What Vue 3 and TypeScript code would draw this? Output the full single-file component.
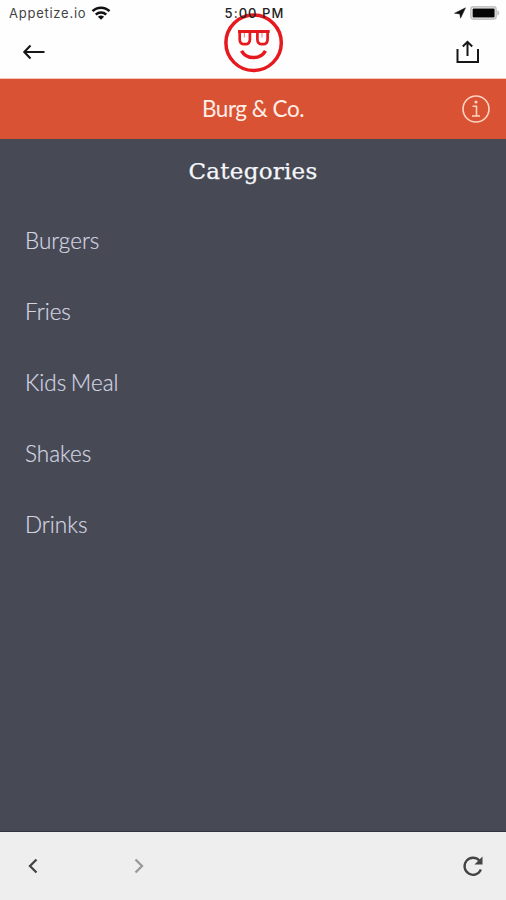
<script setup lang="ts">
const categories: string[] = ['Burgers', 'Fries', 'Kids Meal', 'Shakes', 'Drinks']
</script>

<template>
  <div class="screen">
    <header class="top">
      <div class="status">
        <div class="carrier">
          <span class="carrier-name">Appetize.io</span>
          <svg class="wifi" width="20" height="14" viewBox="0 0 20 14">
            <g fill="none" stroke="#111" stroke-width="2.5">
              <path d="M1.5 5.2C6.2.5 13.8.5 18.5 5.2" />
              <path d="M4.8 8.7C7.7 5.9 12.3 5.9 15.2 8.7" />
            </g>
            <path d="M10 13.7L6.9 10.7Q10 8.2 13.1 10.7Z" fill="#111" />
          </svg>
        </div>
        <span class="time">5:00 PM</span>
        <div class="indicators">
          <svg width="12" height="12" viewBox="0 0 12 12"><path d="M11.5.8L6.6 11.2L5.8 6.9L.5 6.3Z" fill="#111" stroke="#111" stroke-width=".5" /></svg>
          <svg width="30" height="14" viewBox="0 0 30 14">
            <rect x=".9" y=".9" width="25.2" height="12.2" rx="2.5" fill="#fff" stroke="#c3c3c3" stroke-width="1.6" />
            <rect x="2.6" y="2.6" width="22" height="8.8" rx="1" fill="#050505" />
            <path d="M27.3 4.3Q29.3 5 29.3 7T27.3 9.7Z" fill="#c3c3c3" />
          </svg>
        </div>
      </div>
      <nav class="nav">
        <svg width="24" height="16" viewBox="0 0 24 16" fill="none" stroke="#171717" stroke-width="2.1">
          <path d="M22.5 8H2.5M8.5 1.5L2.3 8l6.2 6.5" />
        </svg>
        <svg width="24" height="24" viewBox="0 0 24 24" fill="none" stroke="#171717" stroke-width="2">
          <path d="M1.5 9v13h20.5V9M11.5 16V2M6.8 6.5L11.5 1.8 16.2 6.5" />
        </svg>
      </nav>
      <svg class="logo" width="62" height="60" viewBox="0 0 62 60" fill="none" stroke="#e5191e">
        <circle cx="30.6" cy="29.8" r="27.7" stroke-width="3.5" />
        <path d="M15 18.5H46.700" stroke-width="3" />
        <path d="M16.700 18v8.500q0 4.700 4.700 4.700h.8q4.700 0 4.700-5V18M34.400 18v8.500q0 4.700 4.700 4.700h.8q4.700 0 4.700-5V18" stroke-width="2.700" />
        <path d="M21.300 19v5.500M39 19v5.500" stroke-width="1" opacity=".6" />
        <path d="M18.500 37.800Q22.500 44.600 30.500 44.600T42.500 37.800" stroke-width="3.500" />
      </svg>
    </header>

    <div class="brand">
      <span class="brand-name">Burg &amp; Co.</span>
      <svg class="info" width="28" height="28" viewBox="0 0 28 28" fill="none" stroke="#ffd3c3" stroke-width="1.6">
        <circle cx="14" cy="14" r="13" />
        <path d="M10.5 11.3h4v9.5M10 21h8" />
        <circle cx="14" cy="7" r="1.6" fill="#ffd3c3" stroke="none" />
      </svg>
    </div>

    <main class="content">
      <h1 class="title">Categories</h1>
      <ul class="list">
        <li v-for="name in categories" :key="name" class="item">{{ name }}</li>
      </ul>
    </main>

    <footer class="toolbar">
      <div class="history">
        <svg width="10" height="16" viewBox="0 0 10 16" fill="none" stroke="#444" stroke-width="2.3"><path d="M8.5 1.5L2 8l6.5 6.5" /></svg>
        <svg width="10" height="16" viewBox="0 0 10 16" fill="none" stroke="#999" stroke-width="2.3"><path d="M1.5 1.5L8 8l-6.5 6.5" /></svg>
      </div>
      <svg width="22" height="22" viewBox="0 0 22 22">
        <path d="M17.3 5.5A8.5 8.5 0 1 0 18.9 14.5" fill="none" stroke="#444" stroke-width="2.3" />
        <path d="M20.5 1.5V9.5H12.5Z" fill="#444" />
      </svg>
    </footer>
  </div>
</template>

<style>
body {
  margin: 0;
}
</style>

<style scoped>
.screen {
  display: flex;
  flex-direction: column;
  height: 900px;
  overflow: hidden;
  background: #474955;
  font-family: Lato, sans-serif;
}
svg {
  display: block;
  flex: none;
}
.top {
  position: relative;
  box-sizing: border-box;
  height: 79px;
  background: #fefefe;
  border-bottom: 1px solid #f3c5b5;
}
.status {
  position: relative;
  z-index: 1;
  display: grid;
  grid-template-columns: 1fr auto 1fr;
  align-items: center;
  height: 26px;
  padding: 0 6px 0 9px;
  font-family: Inter, sans-serif;
  font-size: 13px;
  color: #222;
}
.carrier {
  display: flex;
  align-items: center;
  gap: 5px;
}
.carrier-name {
  color: #444;
  letter-spacing: 0.75px;
}
.time {
  font-weight: 500;
  letter-spacing: 1.05px;
}
.indicators {
  display: flex;
  align-items: center;
  justify-content: flex-end;
  gap: 4px;
}
.nav {
  display: flex;
  align-items: center;
  justify-content: space-between;
  height: 52px;
  padding: 0 26px 0 22px;
}
.logo {
  position: absolute;
  left: 223px;
  top: 13px;
}
.brand {
  display: grid;
  grid-template-columns: 1fr auto 1fr;
  align-items: center;
  height: 60px;
  padding: 0 16px;
  background: #d95233;
}
.brand-name {
  grid-column: 2;
  padding-bottom: 2px;
  font-size: 22.5px;
  letter-spacing: -0.5px;
  color: #ffeee7;
}
.info {
  justify-self: end;
}
.content {
  flex: 1;
}
.title {
  margin: 0;
  padding-top: 12px;
  height: 54px;
  line-height: 40px;
  font-family: 'DejaVu Serif', serif;
  font-size: 23px;
  font-weight: 400;
  letter-spacing: 0.25px;
  text-align: center;
  color: #f5f7fa;
  -webkit-text-stroke: 0.25px #f5f7fa;
}
.list {
  margin: 0;
  padding: 0;
  list-style: none;
}
.item {
  height: 71px;
  padding-left: 25px;
  line-height: 71px;
  font-size: 22.5px;
  font-weight: 300;
  word-spacing: -1.5px;
  color: #d3d6e1;
  -webkit-text-stroke: 0.2px #d3d6e1;
}
.toolbar {
  display: flex;
  box-sizing: border-box;
  align-items: center;
  justify-content: space-between;
  height: 69px;
  padding: 0 22px 0 28px;
  border-top: 1px solid #30323d;
  background: #eee;
}
.history {
  display: flex;
  gap: 96px;
}
</style>
